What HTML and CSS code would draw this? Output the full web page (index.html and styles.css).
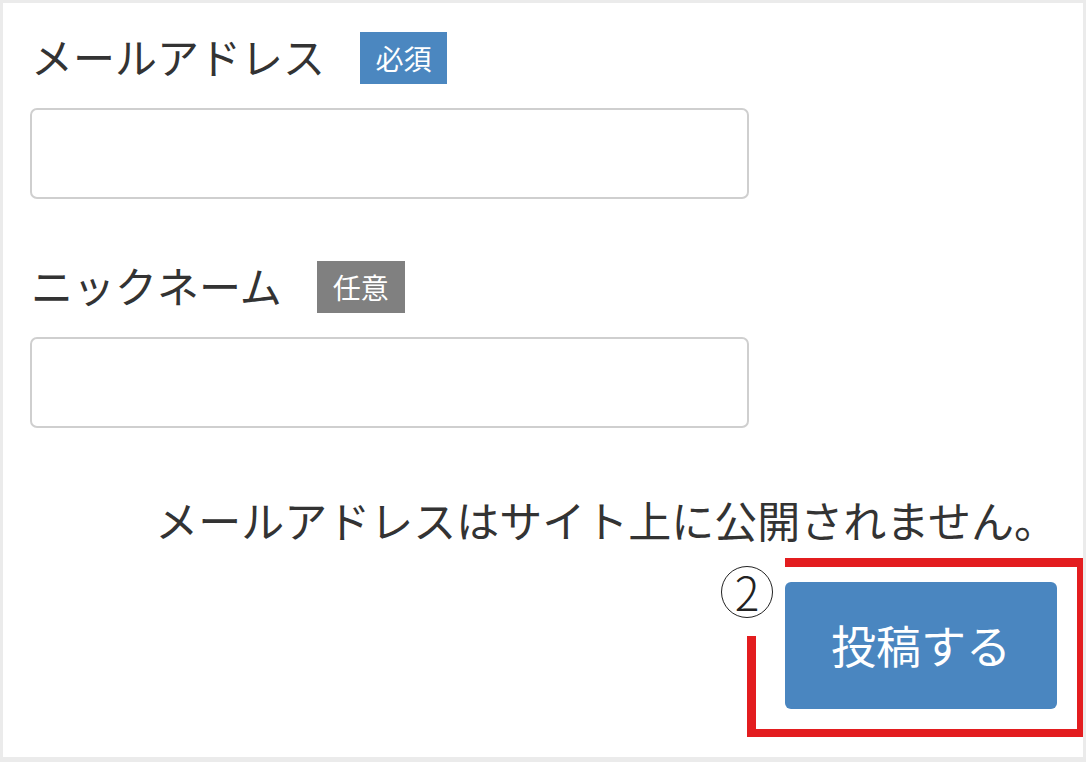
FILE: index.html
```html
<!DOCTYPE html>
<html lang="ja">
<head>
<meta charset="utf-8">
<title>コメントフォーム</title>
<link rel="stylesheet" href="styles.css">
</head>
<body>
<div class="frame">
  <form class="form">
    <div class="field">
      <div class="field-label">
        <span class="label-text">メールアドレス</span>
        <span class="badge badge-required">必須</span>
      </div>
      <div class="input"></div>
    </div>
    <div class="field field-second">
      <div class="field-label">
        <span class="label-text">ニックネーム</span>
        <span class="badge badge-optional">任意</span>
      </div>
      <div class="input"></div>
    </div>
    <p class="note">メールアドレスはサイト上に公開されません。</p>
    <div class="actions">
      <div class="submit-wrap">
        <button type="button" class="submit">投稿する</button>
        <div class="callout-box"></div>
        <div class="callout-mask"><span class="callout-num">2</span></div>
      </div>
    </div>
  </form>
</div>
</body>
</html>
```
FILE: styles.css
```css
html, body {
  margin: 0;
  padding: 0;
}
body {
  background: #ebebeb;
  width: 1086px;
  height: 762px;
  padding: 3px 3px 5px 3px;
  box-sizing: border-box;
  font-family: "Noto Sans CJK JP", "Noto Sans", sans-serif;
  color: #333;
}
.frame {
  background: #fff;
  height: 754px;
  overflow: hidden;
}
.form {
  padding: 29px 26px 0 27px;
}
.field-label {
  display: flex;
  align-items: center;
  height: 52px;
  gap: 35px;
}
.label-text {
  font-size: 42px;
  line-height: 52px;
  padding-left: 1px;
  margin-top: -4px;
}
.badge {
  display: flex;
  align-items: center;
  justify-content: center;
  width: 87px;
  height: 52px;
  color: #fff;
  font-size: 28px;
  line-height: 1;
}
.badge-required {
  background: #4b87c0;
}
.badge-optional {
  background: #808080;
  width: 88px;
}
.input {
  margin-top: 24px;
  width: 719px;
  height: 91px;
  box-sizing: border-box;
  border: 2px solid #cfcfcf;
  border-radius: 7px;
  background: #fff;
}
.field-second {
  margin-top: 62px;
}
.note {
  margin: 61px 0 0 0;
  font-size: 43px;
  line-height: 60px;
  text-align: right;
  white-space: nowrap;
}
.actions {
  display: flex;
  justify-content: flex-end;
  margin-top: 33px;
}
.submit-wrap {
  position: relative;
  width: 272px;
  height: 127px;
}
.submit {
  display: block;
  width: 272px;
  height: 127px;
  border: none;
  border-radius: 6px;
  background: #4a86c0;
  color: #fff;
  font-family: "Noto Sans CJK JP", "Noto Sans", sans-serif;
  font-size: 45px;
  padding: 0 0 2px 0;
}
.callout-box {
  position: absolute;
  left: -38px;
  top: -24px;
  right: -29px;
  bottom: -28px;
  border: 9px solid #e31d1f;
  border-bottom-width: 8px;
  z-index: 1;
  pointer-events: none;
}
.callout-mask {
  position: absolute;
  left: -64px;
  top: -30px;
  width: 64px;
  height: 84px;
  background: #fff;
  z-index: 2;
}
.callout-num {
  position: absolute;
  left: 0;
  top: 14px;
  width: 52px;
  height: 52px;
  box-sizing: border-box;
  border: 1.6px solid #222;
  border-radius: 50%;
  display: flex;
  align-items: center;
  justify-content: center;
  font-size: 46px;
  line-height: 1;
  color: #222;
  font-weight: 300;
  padding-bottom: 2px;
}
```
